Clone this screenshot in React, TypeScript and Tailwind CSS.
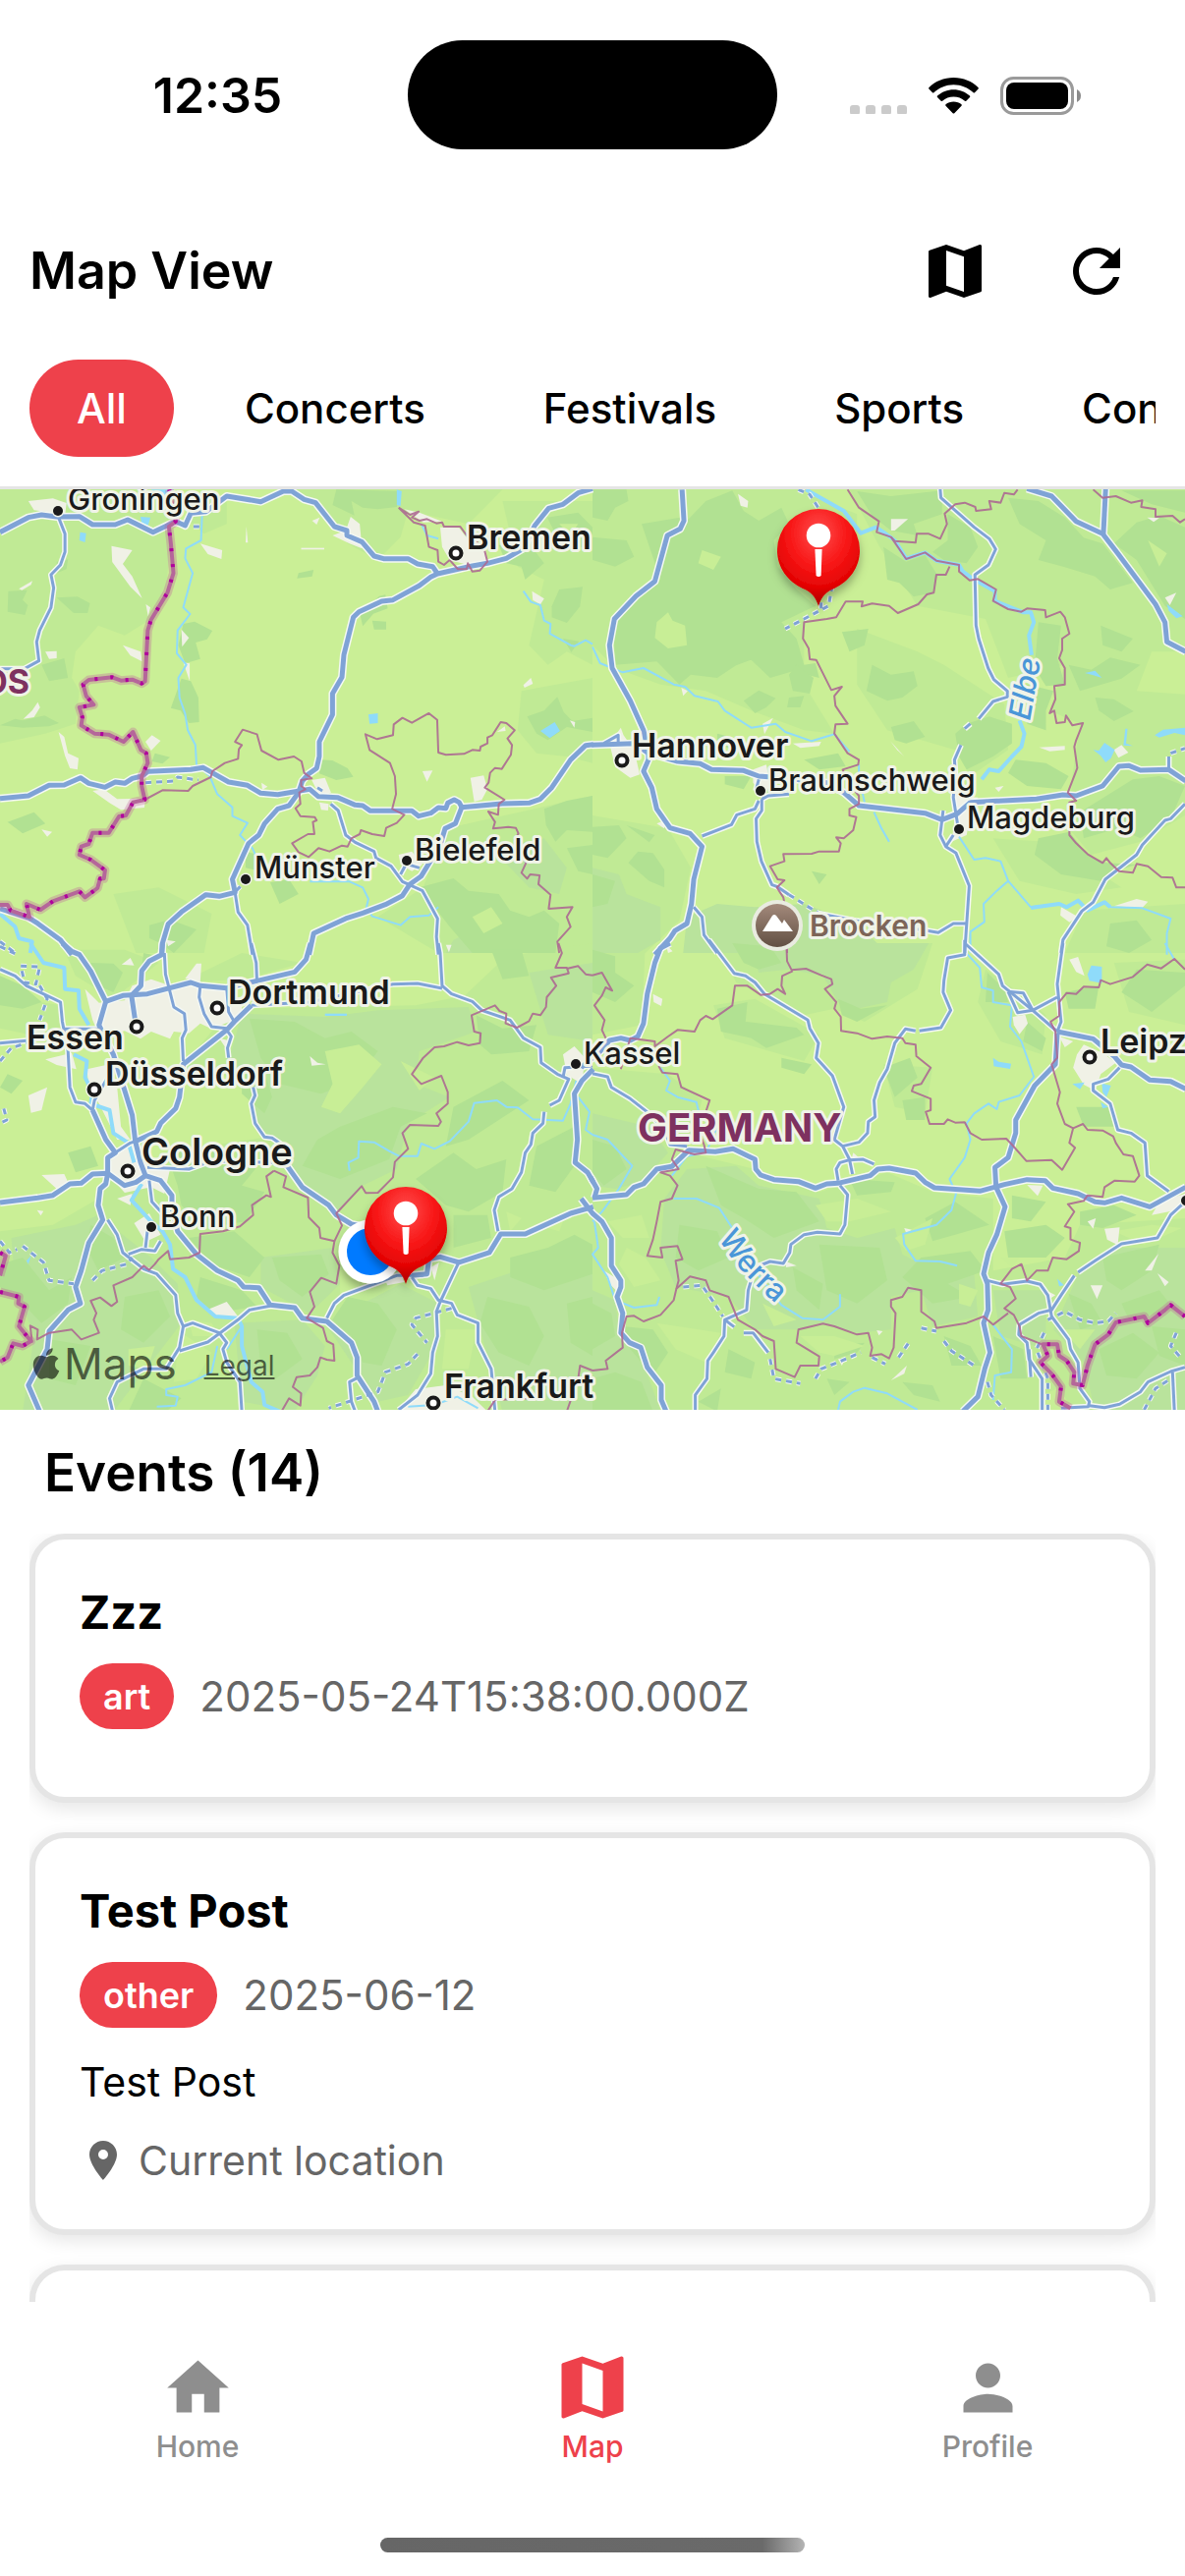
import React from "react";
import { MdHome, MdMap, MdPerson, MdRefresh, MdLocationOn } from "react-icons/md";
import { FaApple } from "react-icons/fa";

type Sheet = {
  at: string;
  light: string[];
  hill: string[];
  forest: string[];
  clearing: string[];
  urban: string[];
  water: string[];
  rivers: string[];
  wideRivers: string[];
  majors: string[];
  minors: string[];
  dashed: string[];
  states: string[];
  nations: string[];
};

const northWest: Sheet = {
  at: "translate(0 490) scale(0.38457 0.33333)",
  light: [
    "0 25 440 25 460 120 450 200 440 320 400 420 330 470 260 440 200 520 190 600 210 640 200 740 120 770 0 800",
    "770 25 1330 25 1240 130 1080 90 1060 170 1000 240 920 190 860 100",
    "1330 60 1568 60 1568 560 1500 520 1450 560 1400 500 1440 300 1370 260",
    "1380 640 1568 600 1568 860 1500 840 1420 830 1370 760",
    "1180 1060 1568 960 1568 1440 1160 1440 1000 1330 1120 1240",
    "300 1260 420 1240 560 1320 540 1440 360 1440",
    "500 30 600 60 600 130 540 160 500 120",
  ],
  hill: ["1300 1120 1440 1090 1500 1180 1480 1260 1400 1240", "1200 1400 1320 1330 1450 1390 1470 1440 1180 1440"],
  forest: [
    "150 355 205 352 238 372 232 402 195 402",
    "22 335 72 332 60 362 74 378 66 408 20 398",
    "150 245 180 238 176 268 150 280",
    "485 435 515 428 562 456 548 482 518 492 530 542 490 556 472 500",
    "480 602 505 610 525 660 527 735 500 738 478 700 452 692",
    "0 745 40 725 60 730 118 715 156 738 130 748 60 752",
    "890 25 1060 30 1050 78 1000 85 960 80 930 60 938 104 880 72",
    "790 280 830 270 826 290 786 296",
    "1004 350 1020 346 1026 388 988 404 960 442 952 402",
    "985 425 1022 428 1022 452 990 452",
    "850 850 880 852 920 876 935 902 890 912 845 892",
    "1395 718 1440 700 1475 658 1492 705 1515 732 1568 722 1568 765 1500 750 1450 790 1420 770",
    "1460 382 1480 330 1542 322 1535 382 1500 432 1460 415",
    "1490 480 1532 488 1512 522",
    "1320 195 1400 190 1440 250 1390 300 1380 260 1340 250",
    "1448 110 1530 95 1568 140 1568 210 1500 190 1470 160",
    "395 1355 450 1338 520 1368 492 1402 460 1440 425 1410 395 1395",
    "410 830 450 842 430 862 402 855",
    "1110 1240 1200 1212 1240 1250 1320 1260 1350 1310 1400 1330 1440 1310 1480 1350 1470 1440 1250 1440 1190 1360",
    "1440 1000 1500 975 1568 960 1568 1070 1500 1065 1470 1100 1445 1050",
    "1500 1120 1568 1110 1568 1200 1530 1190",
    "650 1130 700 1145 690 1190 650 1180",
    "715 1225 765 1215 790 1260 740 1290",
    "20 1040 90 1010 120 1045 60 1075",
    "110 560 170 540 180 600 130 610",
  ],
  clearing: ["1250 1330 1300 1300 1330 1350 1280 1380", "1480 130 1530 130 1510 165"],
  urban: [
    "75 60 140 52 176 66 172 105 120 92 90 88",
    "295 197 350 210 325 252 350 290 376 357 345 322 297 246",
    "50 328 86 304 82 316 58 332",
    "325 500 372 520 376 550 345 532",
    "120 520 150 518 150 540 130 542",
    "62 725 85 700 100 674 106 690 90 720",
    "155 765 170 780 180 830 208 845 205 880 185 876 172 838",
    "385 795 402 775 425 792 400 822",
    "880 165 915 150 928 108 952 130 958 205 925 190",
    "1165 140 1215 142 1240 180 1285 210 1290 245 1260 262 1190 240 1170 200",
    "1070 85 1110 95 1170 122 1120 125",
    "530 190 588 210 586 237 550 222",
    "480 452 500 478 482 505",
    "485 553 502 556 502 610",
    "1408 335 1440 358 1430 376 1410 362",
    "1385 622 1405 600 1410 618 1388 630",
    "1245 905 1280 898 1290 940 1275 972 1255 978",
    "1118 885 1145 883 1130 917",
    "825 912 860 905 876 950 848 966",
    "845 980 870 985 868 1005 850 1003",
    "245 945 275 940 310 970 385 968 382 996 320 1003 290 982",
    "110 1063 138 1070 125 1085",
    "1055 1140 1090 1130 1118 1170 1090 1190 1060 1170",
    "1315 765 1336 748 1338 762",
    "1508 730 1522 735 1520 752",
    "826 120 846 110 838 132",
    "652 137 656 187 650 187",
    "797 203 858 203 858 208 797 208",
    "386 375 398 385 392 412",
    "692 920 708 932 694 942",
    "440 1400 465 1405 445 1420",
  ],
  water: [
    "975 712 1000 708 1000 738 978 740",
    "1430 762 1468 735 1482 762 1455 784",
    "372 108 398 110 392 135 375 130",
    "212 155 228 158 225 186 210 180",
    "400 25 460 25 450 50 410 40",
    "1050 25 1063 30 1060 75 1050 72",
  ],
  rivers: [
    "535 95 532 180 492 205 490 235 510 280 485 385 503 405 470 455 468 525 493 560 472 600 475 660 490 710 497 760 517 805 520 865 555 900 575 955 615 995 615 1022 655 1043 635 1080 668 1120 680 1150",
    "1385 335 1405 368 1430 378 1440 425 1457 435 1455 465 1510 500 1520 503 1550 485 1568 497",
    "820 1222 925 1222 960 1240 975 1275 970 1300 985 1328 1060 1355 1085 1330 1135 1325 1160 1300",
    "1115 130 1130 165 1160 175",
  ],
  wideRivers: ["0 1320 40 1360 50 1395 85 1405 80 1440"],
  majors: [
    "0 155 75 110 110 102 150 108 210 107 245 132 305 132 338 117 405 155 465 122 490 135 505 97 545 92 600 45 690 62 750 30 772 30 805 55 835 65 885 138 918 150 918 165 958 185 990 228 1015 236 1080 236 1105 252 1145 260 1158 282",
    "1568 22 1530 35 1490 70 1452 82 1415 135 1385 205 1340 235 1290 250 1250 258 1158 282 1140 292 1110 318 1040 362 1010 366 950 398 935 415 910 530 905 598 880 648 880 712 845 795 845 840 838 876 815 895 800 915 790 950 765 990 735 1000 700 1045 685 1080 658 1105 615 1215 622 1255 580 1267 545 1262 480 1315 445 1352 430 1410 428 1445",
    "0 968 75 960 130 928 170 927 213 905 235 922 278 934 305 918 330 922 350 907 375 900 392 886 505 880 538 874 605 918 655 928 690 952 735 956 820 940 842 962 893 965 940 988 960 990 980 1006 1090 1006 1108 1022 1140 1013 1160 996 1180 998 1185 982 1202 972 1215 980 1222 995 1330 984 1400 982 1430 970 1460 935 1510 850 1550 806 1570 803",
    "1222 995 1205 1045 1178 1060 1165 1110 1115 1205 1085 1230 1065 1265 1020 1292 960 1318 915 1335 830 1380 818 1445",
    "0 1305 75 1332 100 1350 160 1400 190 1445",
  ],
  minors: [
    "155 110 172 160 172 215 160 255 135 285 142 325 135 385 105 455 97 490 103 548 65 572 0 572",
    "875 985 895 1005 915 1080 940 1102 990 1130 995 1150 1035 1175 1065 1222 1118 1250 1158 1335 1155 1390 1160 1445",
    "1060 1200 1075 1168 1110 1180",
    "622 1255 630 1315 655 1355 668 1445",
  ],
  dashed: ["385 920 460 915 470 903 525 912", "512 138 530 138", "625 1250 650 1220", "0 1405 40 1440", "840 935 860 950"],
  states: [
    "383 972 430 943 498 945 510 930 558 903 562 885 595 860 630 847 632 818 640 805 622 795 642 758 680 772 692 822 737 850 778 840 798 855 805 890 825 907 797 912 797 930 808 940 792 950 795 985 782 998 795 1022 833 1025 838 1035 828 1040 832 1077 815 1077 773 1105 790 1132 817 1147 843 1120 872 1130 905 1112 920 1115 930 1090 952 1077 955 1065 985 1077 1017 1083 1022 1058 1050 1043 1070 1018 1038 1000 1048 955 1045 900 1032 860 978 820 967 772 998 787 1040 775 1042 742 1065 722 1090 737 1135 708 1157 728 1160 828 1180 835 1228 832 1250 820 1270 822 1272 810 1290 800 1290 782 1303 775 1325 735 1340 738 1362 760 1343 785 1355 805 1352 835 1328 878 1310 875 1297 890 1293 920 1283 935 1335 972 1320 985 1318 1018 1292 1008 1310 1040 1305 1060 1345 1055 1365 1058 1372 1075 1362 1095 1392 1165 1380 1195 1395 1213 1403 1200 1428 1203 1425 1230 1457 1262 1452 1305 1515 1300 1500 1330 1510 1360 1475 1405 1480 1440",
    "1055 80 1095 125 1125 135 1135 200 1158 210 1160 245 1175 255 1190 240 1212 268 1235 268 1238 250 1250 275 1270 272 1290 245 1280 200 1235 165 1218 138 1175 138 1170 125 1155 128 1130 115 1110 120 1090 110 1108 92 1085 102 1055 80",
  ],
  nations: [
    "448 25 452 50 465 122 447 138 452 188 459 280 443 340 400 422 391 455 384 610 375 617 350 605 320 608 297 598 235 606 220 620 228 655 248 682 210 690 218 720 215 745 250 770 287 773 327 795 352 765 373 820 387 830 391 860 375 900 375 930 383 972 352 980 333 1020 315 1023 288 1073 245 1073 235 1107 215 1115 210 1140 240 1155 278 1187 275 1213 265 1213 258 1242 225 1270 210 1252 140 1282 107 1308 70 1290 78 1330 28 1310 20 1293 0 1293",
  ],
};

const northEast: Sheet = {
  at: "translate(603 490) scale(0.38457 0.33333)",
  light: [
    "0 25 540 25 700 100 700 180 560 440 560 620 640 770 560 760 420 700 300 640 180 620 60 570 0 500",
    "680 25 1568 25 1568 520 1480 520 1440 640 1568 650 1568 1020 1450 1100 1320 1140 1260 1060 1270 900 1290 740 1210 700 1250 560 1100 600 1040 420 860 380 760 200",
    "700 450 860 520 930 560 1090 680 1100 820 1000 900 960 820 780 760 700 620",
    "0 1020 200 1060 260 1180 230 1340 140 1440 0 1440",
    "1060 1090 1200 1100 1320 1180 1400 1240 1280 1260 1130 1220",
    "1300 1310 1568 1290 1568 1440 1250 1440",
  ],
  hill: ["250 1330 330 1290 430 1300 560 1290 700 1350 780 1440 240 1440", "0 1180 70 1200 90 1260 180 1300 180 1400 120 1440 0 1440"],
  forest: [
    "130 130 232 110 250 120 300 60 370 28 400 90 440 120 500 80 520 130 480 180 490 260 540 330 590 380 500 430 540 480 560 560 590 555 600 600 530 580 470 600 420 545 380 562 330 600 260 590 230 620 170 550 60 560 55 430 115 350 180 300",
    "0 25 90 25 95 60 60 80 40 120 0 110",
    "0 170 90 180 110 230 60 260 0 240",
    "700 30 790 45 925 28 925 100 850 130 860 165 790 150 740 105",
    "770 200 830 245 880 225 912 285 900 340 850 352 812 310 780 300",
    "940 100 1000 140 1020 200 990 250 930 240 900 215 940 180",
    "1100 50 1180 60 1250 110 1300 172 1350 190 1430 310 1370 330 1330 290 1250 262 1180 240 1200 180 1130 130",
    "1440 125 1500 105 1568 140 1568 420 1515 380 1440 240 1380 190",
    "1400 28 1568 28 1568 95 1480 70",
    "1180 430 1240 440 1230 540 1250 620 1200 625 1170 570",
    "740 560 790 590 850 580 860 625 820 660 780 670 725 640",
    "400 670 440 638 485 662 460 690 430 708",
    "520 590 540 560 585 600 575 648 530 640",
    "520 660 560 655 550 690 515 690",
    "960 770 990 740 1050 718 1110 740 1110 800 1060 840 990 880 970 840",
    "790 750 850 732 880 780 830 800 800 790",
    "1115 610 1220 640 1200 700 1200 760 1150 740 1160 690",
    "1260 560 1320 575 1370 538 1450 560 1400 602 1290 640",
    "1330 660 1380 665 1432 702 1380 732 1340 700",
    "1345 440 1430 480 1400 520 1350 500",
    "1120 850 1200 860 1260 900 1240 940 1150 930 1100 890",
    "1180 1090 1262 1070 1310 1140 1360 1165 1440 1170 1380 1190 1345 1220 1240 1200 1170 1140",
    "1360 960 1430 910 1500 900 1568 930 1530 1030 1450 1090 1390 1060 1300 1090 1290 1010",
    "0 1055 70 1050 90 1090 40 1150 0 1140",
    "120 1130 160 1135 190 1185 190 1240 150 1220 95 1165",
    "90 1050 165 1080 150 1102",
    "0 1200 60 1220 40 1290 0 1300",
    "350 900 420 900 400 940 350 925",
    "560 850 650 830 670 870 600 880",
    "660 460 730 450 720 500 680 520",
    "330 770 400 790 380 820 330 805",
    "1370 1350 1440 1340 1480 1400 1420 1440 1360 1420",
    "580 1190 620 1200 600 1230",
  ],
  clearing: ["170 430 200 400 212 425 245 440 250 500 200 510 165 478", "290 210 340 230 320 270 280 250", "1470 180 1520 220 1500 260"],
  urban: [
    "45 800 75 752 82 775 110 820 125 895 100 905 60 872",
    "790 115 835 115 800 150 790 150",
    "385 38 412 60 410 80 392 74",
    "450 740 478 722 455 772",
    "530 800 605 795 600 808 550 814",
    "235 630 252 640 240 655",
    "425 880 460 865 470 930 450 960 425 920",
    "788 793 800 808 825 840 806 820",
    "1182 812 1250 808 1250 820 1210 824",
    "1380 820 1400 805 1418 828 1392 844",
    "960 960 1020 965 1000 1020 990 1080 950 1100 960 1020",
    "1240 1300 1285 1330 1262 1346 1238 1325",
    "1380 1297 1440 1275 1470 1283 1455 1302",
    "1515 355 1545 340 1528 378",
    "170 1045 190 1035 190 1060",
    "1065 935 1088 930 1075 948",
    "1468 110 1500 112 1485 124",
  ],
  water: [
    "1325 820 1340 822 1355 798 1382 820 1372 845 1358 858 1345 838",
    "1488 775 1510 758 1568 752 1568 775 1540 768 1500 782",
    "1303 585 1330 578 1348 600 1325 592",
    "1520 375 1562 412 1545 418 1525 395",
    "1410 755 1416 755 1412 800 1430 808 1405 806",
  ],
  rivers: [
    "0 505 20 555 80 583 135 570 215 620 245 627 270 655 332 672 350 700 420 752 485 740 510 765 580 793 640 772 680 825",
    "705 865 705 900 720 980",
    "745 1010 765 1060 785 1100",
    "970 1085 1010 1155 1040 1150 1080 1160 1100 1220 1160 1300 1235 1290 1255 1300 1285 1280 1310 1310 1355 1285 1370 1300 1455 1303 1530 1335 1520 1380 1520 1445",
    "1100 1220 1070 1250 1035 1290 1037 1345 1000 1375 1000 1440",
  ],
  wideRivers: [
    "565 25 665 90 710 158 750 140 770 155 800 180 830 235 880 217 910 242 970 255 980 275 1010 300 1065 335 1065 365 1140 400 1160 400 1168 430 1155 470 1162 530",
    "1130 730 1143 770 1135 810 1110 840 1075 885 1050 880 1030 910",
    "1160 1302 1235 1290 1255 1300 1285 1280 1310 1310 1355 1285 1370 1300",
  ],
  majors: [
    "237 25 242 120 232 145 198 165 165 305 115 350 58 420 45 500 52 570 100 670 135 760 148 830 148 850 135 885 157 935 170 1000 205 1058 258 1075 290 1115 268 1215 262 1290 250 1350 218 1372 205 1395 165 1445",
    "-2 805 110 800 148 830 225 855 285 862 315 880 400 883 440 900 500 905 620 920 665 950 705 990 880 1013 925 1033 965 1015 1000 980 1070 976 1175 970 1245 957 1280 960 1350 930 1393 870 1420 868 1450 882 1525 880 1570 915",
    "1150 22 1215 45 1280 122 1350 160 1390 220 1490 375 1515 430 1520 490 1570 520",
    "1358 22 1352 160",
  ],
  minors: [
    "920 22 922 50 1010 140 1050 175 1067 207 1048 255 1012 285 1015 440 1022 480 1047 570 1062 605 1098 640 1098 658 1060 672 1022 725",
    "985 755 1000 740",
    "975 805 958 850 960 890 955 965 968 1060",
    "928 1005 920 1080 935 1115 962 1135 997 1235 985 1440",
    "935 1115 955 1080",
    "440 910 432 945",
    "448 970 465 960 520 955",
    "440 975 430 1000 382 1018 368 1048 290 1083",
    "448 970 448 1005 433 1030 435 1100 447 1160 475 1232 490 1238 520 1262",
    "600 1320 700 1342 885 1372 915 1378 955 1350 990 1350",
    "1568 985 1530 1030 1515 1035 1455 1110 1440 1140 1357 1215 1325 1285 1295 1312 1245 1400 1240 1440",
    "1525 880 1525 840",
    "268 1300 290 1330 295 1385 330 1440",
    "30 800 68 775 68 800",
  ],
  dashed: ["520 1262 600 1320", "545 25 575 40 600 85 640 280 625 380 560 420 510 450", "605 370 605 400", "1530 830 1568 815"],
  states: [
    "675 25 705 80 758 122 752 155 790 170 800 182 855 187 858 160 890 160 920 175 938 130 932 98 960 70 985 65 1013 78 1015 90 1055 85 1050 60 1080 65 1090 35 1115 40 1125 25",
    "790 170 830 237 880 217 910 242 970 255 970 275 998 302 1020 298 1068 330 1060 365 1100 390 1135 398 1150 388 1198 393 1200 415 1238 398 1250 415 1262 465 1243 480 1243 515 1235 540 1250 570 1250 620 1222 625 1225 665 1210 708 1222 700 1228 738 1250 735 1253 715 1270 745 1298 738 1280 790 1275 810 1283 875 1258 950 1280 975 1262 980 1262 1080 1280 1105 1310 1138 1350 1165 1360 1150 1370 1165 1393 1190 1430 1195 1440 1168 1470 1175 1505 1208 1535 1210 1545 1240 1568 1240",
    "945 260 935 285 910 285 903 340 885 345 862 375 808 402 785 380 740 373 712 382 715 367 670 367 645 415 620 420 560 430 557 480 572 510 575 543 592 545 632 637 660 627 640 655 643 685 675 740 643 742 640 770 675 830 705 850 703 865 662 880 680 925 705 960 705 985 680 1000 680 1020 698 1025 690 1065 665 1090 645 1087 657 1105 652 1130 600 1130 580 1137 505 1138 508 1160 470 1175 490 1215 508 1218 488 1240 505 1270 510 1300 515 1440",
    "1325 25 1350 50 1385 45 1425 65 1455 58 1452 78 1490 85 1490 108 1535 105 1555 125 1568 115",
  ],
  nations: [],
};

const southWest: Sheet = {
  at: "translate(0 960) scale(0.38457 0.33333)",
  light: [
    "170 20 330 20 420 60 300 170 200 100",
    "430 640 720 590 700 430 480 380 560 270 640 200 1100 190 1230 160 1340 40 1568 0 1568 1430 0 1430 0 880 140 860 260 780 280 700 380 720",
    "0 160 160 190 170 260 80 280 0 260",
    "480 120 640 30 800 60 650 110",
  ],
  hill: [
    "640 215 860 225 1000 205 1240 195 1260 270 1110 330 1100 430 1190 470 1080 550 1050 690 960 740 890 830 800 760 720 600 670 540 660 440 600 380",
    "30 900 200 860 260 830 400 960 470 1040 480 1160 400 1280 300 1430 60 1430 90 1200 40 1040",
    "690 960 880 930 900 1040 820 1130 690 1050",
    "860 1160 1060 1040 1160 1100 1150 1240 1080 1380 1000 1400",
    "1240 1050 1420 980 1568 1000 1568 1430 1330 1430",
    "620 1160 800 1150 860 1230 840 1320 780 1430 640 1400",
    "1400 90 1568 60 1568 300 1450 280",
  ],
  forest: [
    "240 60 300 62 325 90 300 150 260 130 235 100",
    "380 30 420 40 400 60 375 70",
    "440 640 560 620 590 680 690 670 640 740 700 760 650 850 540 870 480 800 470 740",
    "640 400 700 390 720 470 700 520 640 460",
    "660 230 780 240 860 290 930 270 1000 330 940 420 850 460 740 430 690 350",
    "900 560 1040 500 1130 520 1060 560 1030 660 900 720 800 680 840 600",
    "1100 720 1200 640 1260 690 1340 660 1330 760 1240 820 1180 800",
    "1200 830 1290 830 1300 900 1200 930",
    "1260 220 1330 260 1420 250 1400 330 1300 340 1270 310",
    "1200 500 1330 420 1400 480 1320 540 1240 600 1180 620",
    "1420 620 1520 560 1520 680 1470 760 1400 740",
    "1350 960 1450 930 1520 890 1568 920 1568 1010 1440 1060 1350 1020",
    "1290 1080 1400 1110 1440 1200 1400 1290 1320 1250 1270 1160",
    "1500 1100 1568 1080 1568 1260 1510 1220",
    "920 1080 1000 1100 1050 1180 1010 1290 960 1280 930 1200 880 1150",
    "500 900 620 880 700 960 660 1020 560 980",
    "530 1020 640 1060 680 1110 560 1130 520 1080",
    "240 860 300 900 330 960 260 1000 230 930",
    "0 980 60 960 130 1060 190 1020 180 1100 110 1160 60 1100 0 1050",
    "130 1210 240 1230 200 1350 130 1330",
    "330 1080 420 1060 450 1140 380 1220 320 1180",
    "380 1330 480 1390 440 1430 340 1430",
    "680 1180 760 1190 800 1270 730 1330 690 1290",
    "720 960 850 950 870 1010 800 1080 740 1030",
    "1300 20 1380 20 1400 100 1330 110",
    "0 100 60 130 110 180 60 200 0 190",
    "180 640 240 620 260 680 200 700",
    "20 400 60 420 30 460 0 440",
  ],
  clearing: [
    "860 330 950 310 1010 370 960 440 900 520 850 500 880 430",
    "1000 800 1090 780 1100 860 1010 850",
    "500 1150 560 1160 580 1200 510 1200",
    "1180 1180 1260 1180 1240 1300 1170 1300",
    "900 1000 960 970 950 1060 900 1080",
    "1060 360 1150 410 1110 450",
    "480 1190 560 1250 520 1330 460 1340 470 1250",
    "1420 860 1500 820 1480 880",
    "1340 820 1380 840 1350 880",
    "340 1240 410 1230 390 1300 340 1290",
  ],
  urban: [
    "225 140 262 182 330 175 350 130 400 110 450 130 505 120 605 140 640 180 640 225 560 262 530 245 500 275 460 270 450 292 400 270 372 292 330 268 265 285 245 235",
    "230 385 290 370 310 440 320 560 345 600 310 600 262 490 235 440",
    "300 640 355 612 395 650 450 690 435 765 400 745 330 762 285 705",
    "75 465 125 440 110 510 82 518",
    "110 708 170 705 182 735 152 752",
    "355 855 395 825 425 890 385 912",
    "548 1120 600 1095 630 1140 580 1143",
    "820 345 840 365 862 370 825 374",
    "120 355 190 335 202 385 150 372",
    "1020 1030 1060 1010 1070 1035 1025 1045",
    "1140 990 1162 975 1150 1030",
    "1100 1362 1180 1350 1250 1385 1290 1430 1050 1430",
    "1490 340 1520 315 1548 350 1540 430 1500 402",
    "322 65 345 45 355 68",
    "520 62 533 62 530 118 490 108",
    "580 290 615 300 600 325",
    "310 780 350 765 345 800",
    "98 815 115 818 108 832",
    "1180 5 1195 5 1188 28",
  ],
  water: ["860 215 918 215 918 222 860 222", "70 970 82 955 75 980"],
  rivers: [
    "600 1240 640 1170",
    "575 1230 560 1310 490 1350 440 1362 440 1380 470 1385 465 1412 415 1415",
    "925 695 922 670 948 655 950 605 990 608 1030 635 1055 650 1105 650 1115 612 1150 628 1190 605 1240 545 1255 488 1315 480 1340 500 1370 502 1410 538 1490 542 1510 490 1525 420",
    "1530 470 1560 515 1550 570 1568 585",
    "1080 1415 1150 1410 1210 1385 1265 1420",
  ],
  wideRivers: [
    "80 0 115 60 170 75 172 140 208 145 210 200 235 250",
    "195 340 230 360 225 410 245 455 240 490 290 510 300 580 340 610 355 670",
    "375 735 348 785 400 850 430 880 450 920 458 995 490 1020 520 1090 570 1140 630 1145 640 1170 640 1230 665 1340 695 1370 700 1410 740 1430",
  ],
  majors: [
    "165 0 190 25 210 35 240 85 280 178 262 250 300 340 330 450 350 525 358 605 372 670 385 710 425 725 455 770 455 810 470 880 520 950 575 1000 630 1030 645 1050 685 1052 715 1105 780 1113 800 1145 865 1155 930 1220 945 1265 945 1320 990 1400 1000 1430",
    "280 178 325 160 390 155 505 120 530 130 600 137 680 115 780 88 810 50 822 0",
    "0 792 100 778 140 770 185 735 215 733 245 705 285 703 330 740 360 730 385 710",
    "430 0 428 35 395 55 375 85 373 130 348 160 357 230",
    "665 190 620 240 600 265 485 370 475 470 465 505 425 550 415 575 358 605",
    "740 640 760 680 800 745 870 800 890 830 930 858 980 870",
    "1570 385 1540 420 1520 460 1528 600 1522 670 1555 700 1570 730",
    "1570 805 1510 825 1390 888 1325 888 1295 945 1215 975 1165 958 1135 965 1130 1010 1090 1015",
    "285 703 280 735 265 750 260 800 272 845 235 915 215 1000 200 1050 213 1100 180 1120 130 1185 125 1240 75 1350 105 1430",
    "285 703 285 655 305 640 280 600 245 510",
  ],
  minors: [
    "435 30 438 95 460 195 488 215 492 265 482 290 485 360",
    "530 130 527 165 540 215 560 255 600 260",
    "600 137 605 210 620 240",
    "600 265 612 285 602 320 605 350",
    "670 440 675 465 665 490 675 550 700 592 720 595 745 615",
    "665 0 678 60 680 115",
    "1160 0 1165 30 1170 130 1195 155 1250 178 1275 205 1350 235 1385 290 1430 318 1432 365 1475 400 1505 415 1480 480 1455 495",
    "1490 410 1495 380 1568 375",
    "665 190 820 180 1040 125 1105 123 1170 138",
    "1440 515 1437 550 1410 580 1405 615 1390 640 1380 700 1355 750 1320 775 1308 815 1318 880",
    "245 510 225 490 200 485 185 440 180 330 165 240 160 180 70 130 40 100 0 80",
    "245 510 250 480 290 400",
    "305 640 345 610 358 605",
    "390 685 500 690 560 665 720 670",
    "285 845 310 890 325 945 380 995 415 1010 465 1075 470 1130 485 1170 475 1235 440 1300 380 1300 310 1340 290 1390 298 1430",
    "485 1170 510 1160 580 1190 600 1220 590 1240 600 1280 635 1340 640 1430",
    "475 1245 550 1218 630 1150 660 1120 715 1108",
    "865 1145 885 1100 910 1075 980 1045 1050 1015 1120 1015",
    "1090 1020 1105 1045 1140 1055 1160 1090 1195 1100 1210 1135 1265 1160 1265 1220 1300 1300 1310 1430",
    "1212 980 1165 1095 1155 1125 1158 1200 1145 1250 1140 1315 1105 1380 1055 1425",
    "385 930 390 880",
    "395 725 402 790 430 825",
    "340 950 375 935 410 940 425 910",
    "0 305 70 298",
    "170 262 262 262",
    "950 1325 925 1340 930 1400 940 1430",
  ],
  dashed: [
    "0 10 45 35",
    "55 70 105 72 95 125 65 120 55 70",
    "105 130 125 170 105 235",
    "0 360 30 320 70 305",
    "10 505 18 540 0 550",
    "0 910 25 945 45 935",
    "60 925 115 975 130 1030 195 1040",
    "245 1030 270 1000 335 980 350 960",
    "1195 1115 1100 1145 1090 1165 1130 1220",
    "1105 1255 1080 1285 1020 1310 1000 1370 870 1420",
  ],
  states: [
    "725 695 757 712 750 745 815 777 817 837 845 870 848 900 885 910 905 862 890 825 957 742 968 763 1000 762 1040 715 1045 668 1080 628 1065 580 1085 555 1160 558 1167 545 1155 520 1185 490 1185 455 1168 405 1115 430 1090 400 1120 350 1150 318 1175 315 1210 302 1240 312 1270 305 1272 275 1255 270 1248 220 1310 190 1322 207 1340 215 1338 245 1368 258 1400 238 1410 215 1430 220 1445 195 1447 165 1472 130 1458 105 1505 92 1500 75 1470 75 1487 30 1478 0",
    "1500 78 1530 70 1550 95 1568 98",
    "725 695 705 712 717 775 705 770 667 800 670 830 635 865 590 880 530 888 528 945 500 960 450 965 445 940 420 965 410 980 395 998 380 985 350 1020 300 1045 310 1095 295 1108 265 1082 240 1092 255 1130 248 1150 262 1190 215 1210 190 1180 130 1190 98 1210 100 1180 80 1168 85 1220",
    "885 910 880 945 898 985 890 1040 850 1022 820 1065 832 1110 812 1145 855 1175 865 1215 882 1225 885 1275 865 1272 848 1265 840 1295 820 1320 785 1325 775 1355 797 1375 795 1412 765 1390 745 1430",
    "1568 1305 1535 1290 1530 1330 1500 1430",
    "1290 1430 1310 1395 1400 1390",
  ],
  nations: ["0 945 15 955 0 1015", "0 1065 50 1080 48 1100 65 1110 50 1170 82 1215 60 1230 35 1222 20 1265 0 1278"],
};

const southEast: Sheet = {
  at: "translate(603 960) scale(0.38457 0.33333)",
  light: [
    "0 380 200 400 290 480 250 640 430 690 600 760 780 700 900 760 1060 780 1060 1000 1250 960 1290 860 1568 840 1568 1430 0 1430",
    "0 0 140 0 130 250 0 280",
    "330 0 900 0 860 140 720 240 640 200 560 220 380 120",
    "320 190 430 170 600 280 560 360 350 290",
    "1040 80 1140 160 1200 220 1190 340 1080 300 1020 180",
    "1380 60 1568 50 1568 250 1420 210",
    "770 370 900 380 880 520 800 500",
  ],
  hill: [
    "420 0 890 0 850 80 790 120 780 180 700 200 650 180 610 100 520 80 440 90",
    "190 780 250 690 380 680 440 740 600 780 620 870 700 900 800 870 820 950 900 1000 1010 1010 1020 1140 900 1170 870 1060 790 1080 790 1180 700 1190 600 1160 540 1180 430 1180 360 1080 220 1050 180 940",
    "1290 1000 1400 930 1568 930 1568 1430 1330 1430 1300 1280 1220 1180",
    "0 1060 60 1090 70 1180 140 1300 180 1430 0 1430",
    "0 520 150 560 200 640 130 730 60 750 0 740",
    "1060 1060 1200 1060 1200 1240 1080 1200",
  ],
  forest: [
    "370 0 470 10 500 60 440 80 400 60",
    "330 200 410 180 405 240 540 258 560 280 460 320 420 290 340 270",
    "0 20 60 40 60 90 110 130 60 180 0 150",
    "500 350 580 370 560 400 500 380",
    "650 170 710 200 780 190 700 240 660 220",
    "1045 90 1090 140 1100 180 1040 180",
    "1440 80 1568 90 1568 130 1480 210 1400 150",
    "1150 240 1200 290 1190 330 1140 300",
    "770 380 840 350 860 410 800 470",
    "820 480 880 470 880 540 830 540",
    "1280 500 1370 500 1390 560 1300 560",
    "1250 150 1340 130 1330 200 1260 200",
    "0 600 60 620 90 690 30 740 0 700",
    "300 680 440 750 540 760 600 850 480 900 400 840 340 800",
    "680 720 800 730 790 760 700 770",
    "880 840 960 790 1050 860 960 890 900 910",
    "870 960 1000 940 1040 1000 940 1040 1000 1080 900 1100 820 1020",
    "600 920 760 930 780 1030 700 1100 620 1060",
    "230 860 330 880 360 960 280 1000 220 960",
    "530 990 610 1040 600 1120 540 1060",
    "1090 880 1200 860 1250 900 1200 960 1100 960",
    "1110 770 1200 790 1160 850 1110 840",
    "1290 820 1380 800 1440 830 1350 870 1290 860",
    "1350 960 1500 920 1480 1000 1400 1060 1360 1030",
    "1260 1070 1320 1100 1350 1160 1290 1180",
    "1400 1100 1500 1060 1540 1120 1420 1150",
    "1340 1240 1430 1190 1500 1250 1440 1330 1360 1320",
    "1480 1170 1568 1180 1568 1290 1500 1260",
    "80 1170 160 1180 200 1250 160 1320 100 1240",
    "0 1100 50 1130 60 1200 0 1240",
    "0 1330 60 1310 130 1340 160 1430 0 1430",
    "360 1240 430 1280 420 1330 350 1310",
    "640 1230 720 1220 700 1250 640 1270",
    "930 1200 1000 1230 1030 1290 950 1290",
    "820 1340 900 1350 920 1400 850 1380",
    "1060 1200 1140 1240 1150 1330 1080 1330",
    "280 1400 340 1360 330 1430",
    "620 1330 680 1340 640 1380",
  ],
  clearing: [
    "800 900 900 840 880 920 830 940",
    "170 1160 340 1190 300 1280 220 1240",
    "450 1100 540 1150 480 1170",
    "970 1040 1020 1060 1000 1110 970 1100",
    "590 800 700 780 790 820 680 850 620 850",
    "90 930 140 960 180 1030 110 1050 70 980",
    "1080 960 1130 960 1110 990",
    "1240 1180 1330 1180 1290 1240",
    "40 850 130 830 150 900 80 900",
    "1380 880 1480 860 1560 870 1460 920",
    "1190 1380 1230 1360 1280 1430 1200 1430",
    "550 1200 640 1200 720 1230 640 1260 600 1250",
  ],
  urban: [
    "1300 310 1350 335 1385 365 1345 400 1330 450 1300 432 1272 380 1282 340",
    "1112 225 1145 218 1152 245 1130 278 1115 250",
    "160 155 185 170 182 192 162 180",
    "1262 50 1285 42 1302 100 1280 88",
    "1355 872 1395 868 1390 922 1362 905",
    "1310 850 1332 840 1325 872",
    "1318 1045 1350 1045 1335 1087",
    "1495 1008 1525 1035 1515 1048",
    "1462 1000 1498 948 1480 1000",
    "30 1000 80 1035 75 1075 45 1040",
    "512 972 540 985 512 990",
    "790 1335 832 1290 825 1315",
    "1150 738 1192 740 1178 772",
    "1500 790 1568 765 1568 810 1480 830",
    "1235 285 1272 300 1250 318",
    "1200 1060 1225 1075 1205 1090",
    "825 870 845 875 830 885",
    "752 1182 768 1185 758 1198",
    "650 1270 670 1268 660 1290",
    "690 640 710 660 685 662",
    "195 5 212 25 200 30",
  ],
  water: [
    "1310 95 1320 68 1348 72 1348 122 1315 115",
    "1060 350 1075 362 1108 368 1105 384 1062 376",
    "1270 430 1302 425 1290 446",
    "1348 428 1372 435 1360 470 1350 455",
    "1345 485 1365 500 1350 505",
    "1230 1025 1248 1045 1235 1048",
  ],
  rivers: [
    "0 585 40 600 105 680 70 750 25 820 0 850",
    "5 850 15 930 0 950 40 1020 60 1090 110 1113 170 1105 177 1080",
    "215 780 275 780 335 808 370 870 430 1000 500 1105 555 1145 610 1150 655 1110 655 1072",
    "650 1425 655 1400 690 1370 720 1358 780 1375 860 1425",
    "985 25 1025 75 1030 135 1060 145 1060 180 1110 190 1105 255 1135 300 1168 408 1130 465 1075 485 1070 507 1048 490 1010 520 990 550 1000 600 985 655 945 720 962 765 950 815 910 860 822 888 825 920 855 970 920 972 965 985",
    "180 380 205 420 195 450 225 470 275 485 280 510 330 560 300 640",
    "210 710 250 650 300 640",
    "1060 1165 1110 1240 1108 1310 1065 1320 1060 1395",
    "1515 0 1540 50",
  ],
  wideRivers: [],
  majors: [
    "205 0 180 15 165 60 145 155 135 245 120 285 100 297 75 290 45 297 20 330 -30 380",
    "0 778 90 768 110 745 135 735 170 690 210 682 255 632 325 637 372 628 430 660 432 690 445 708 480 722 545 728 590 748 620 735 650 733 735 710 755 690 785 687 855 702 880 730 905 747 1025 757 1090 737 1150 722 1198 725 1218 748 1285 765 1330 790 1355 793 1400 778 1475 805 1570 745",
    "-30 780 0 825 25 850 50 900 50 985 75 1030 75 1050 65 1080 80 1130 75 1190 98 1220 128 1235 145 1295 182 1350 182 1395 195 1430",
    "1230 270 1325 292 1380 345 1400 372 1425 378 1475 418 1530 422 1570 445",
    "1230 275 1225 370 1170 435 1120 540 1120 580 1100 655 1065 685 1068 745 1092 805 1070 890 1048 945 1035 1010 1045 1040 1047 1120 1035 1160 1052 1250 1038 1300 1020 1385 980 1430",
    "-5 715 12 750 5 778",
  ],
  minors: [
    "1245 0 1230 125 1240 240 1230 270",
    "308 -10 375 92 405 100 430 120 455 155 570 235 575 260 598 305 592 350 635 405 665 500 640 600 662 620 680 660 688 705",
    "655 740 675 768 668 860 655 888 595 883 560 890 525 920 522 945 505 978 470 972 430 990 412 1060 408 1120 350 1150 348 1200 320 1250 305 1275 303 1330 272 1380 272 1430",
    "662 620 705 608 728 580 730 545 748 530 745 480 760 425 780 385 800 305 828 262 855 268",
    "865 268 922 258 948 205 928 150 930 115 940 45 985 35 985 -10",
    "985 0 1075 95 1085 130 1165 205 1230 270",
    "1100 148 1140 152 1165 205 1230 165",
    "1100 148 1125 212 1165 205",
    "0 398 40 408 50 440 100 475 150 520 190 570 205 615 250 620",
    "1395 380 1365 415 1325 430 1325 450 1370 490 1390 570 1425 580 1462 610 1468 710 1525 758",
    "1568 790 1530 830 1495 900 1400 918 1330 970 1285 1005",
    "1275 1015 1240 1075 1215 1120 1180 1130 1130 1165 1128 1195 1150 1220 1155 1270 1190 1330 1190 1430",
    "1045 1030 1085 1042 1150 1032 1185 1042 1205 1075 1215 1140 1260 1210 1265 1240 1285 1280 1290 1360 1315 1400 1312 1415 1240 1420",
    "1315 1412 1355 1418 1395 1408 1450 1370 1470 1340 1530 1308 1568 1295",
    "1535 1310 1540 1430",
    "650 725 645 690 655 670 680 662 715 660 745 675",
    "400 1190 425 1190 465 1250",
    "350 1150 375 1172",
    "1155 1240 1160 1325",
  ],
  dashed: [
    "240 1050 290 1045 320 1095 345 1140",
    "470 1270 480 1330 550 1345",
    "590 1330 605 1300 660 1275 710 1250",
    "740 1265 775 1285",
    "810 1265 840 1215",
    "870 1175 910 1185",
    "930 1215 950 1245 1010 1290",
    "1045 1340 1055 1380 1090 1425",
    "1205 1150 1250 1125 1290 1150 1330 1160 1365 1155 1385 1130",
    "1545 1190 1530 1230 1560 1270",
    "1460 1425 1490 1360 1530 1330",
    "1195 1190 1175 1240 1205 1330 1205 1425",
  ],
  states: [
    "0 98 25 90 52 145 35 135 25 160 5 190 32 235 25 265 35 290",
    "75 385 100 290 165 300 165 315 200 285 225 265 270 270 285 235 300 222 318 232 370 190 377 130 410 130 445 158 470 155 490 140 510 155 500 130 502 100 530 85",
    "513 0 515 55 527 82 565 78 605 98 632 110 635 125 615 140 645 180 640 200 657 225 658 268 700 275 740 292 780 285 820 290 828 305 855 310 857 345 895 380 870 430 850 435 845 452 895 475 895 510 882 515 892 552 930 552 940 538 960 548 985 547 1000 580 1030 600 1095 597 1110 615 1148 665 1215 662 1243 692 1277 625 1262 610 1272 565 1250 552 1230 490 1237 455 1215 370 1230 350 1225 270 1212 240 1235 222 1235 180 1255 152 1280 155 1300 133 1340 135 1345 113 1370 125 1430 103 1468 65 1505 77 1540 48 1568 80",
    "1272 565 1298 552 1310 570 1350 572 1378 590 1385 610 1405 645 1430 650 1447 710 1435 728 1382 725 1355 745 1350 775 1310 770 1300 787 1258 797 1275 820 1250 865 1265 870 1265 905 1290 915 1287 940 1255 965 1218 960 1205 1000 1175 1000 1150 1030 1135 980 1110 995 1080 1040 1105 1050 1120 1085 1090 1115 1115 1135 1130 1170 1135 1200 1190 1225",
    "1100 1130 1060 1165 1035 1140 990 1160 910 1175 905 1155 870 1125 870 1060 835 1052 820 1080 790 1090 790 1110 802 1130 797 1235 785 1268 765 1255 735 1260 740 1235 730 1190 700 1195 640 1170 610 1162 545 1180 540 1220 600 1262 598 1290 550 1290 535 1325 485 1300 480 1215 450 1200 430 1180 385 1150 360 1080 310 1060 300 1030 258 1018 222 1055 215 1090 180 1135 135 1155 110 1138 90 1140 78 1190 80 1235 35 1275 40 1300 0 1305",
    "222 1055 228 1030 220 970 238 965 225 925 180 930 185 960 145 955 160 905 170 850 180 790 210 780 225 740 205 710 180 700 228 690 210 660 220 630 270 645 300 640 295 615 265 520 300 515 310 480 235 440 225 400 185 395 175 375",
  ],
  nations: [
    "1568 1140 1530 1105 1515 1120 1470 1160 1460 1140 1385 1158 1365 1195 1330 1225 1310 1290 1297 1350 1272 1345 1275 1310 1255 1275 1235 1260 1230 1225 1192 1225 1205 1260 1185 1280 1215 1315 1240 1355 1235 1400 1265 1420",
  ],
};

const sheets = [northWest, northEast, southWest, southEast];

function Areas({ pick, fill }: { pick: (s: Sheet) => string[]; fill: string }) {
  return (
    <>
      {sheets.map((s) => (
        <g key={s.at} transform={s.at} fill={fill}>
          {pick(s).map((points) => (
            <polygon key={points} points={points} />
          ))}
        </g>
      ))}
    </>
  );
}

type LinesProps = {
  pick: (s: Sheet) => string[];
  stroke: string;
  width: number;
  dash?: string;
  opacity?: number;
};

function Lines({ pick, stroke, width, dash, opacity }: LinesProps) {
  return (
    <>
      {sheets.map((s) => (
        <g key={s.at} transform={s.at} fill="none" stroke={stroke} strokeWidth={width} strokeDasharray={dash} strokeLinejoin="round" opacity={opacity}>
          {pick(s).map((points) => (
            <polyline key={points} points={points} vectorEffect="non-scaling-stroke" />
          ))}
        </g>
      ))}
    </>
  );
}

type City = { name: string; x: number; y: number; cx: number; cy: number; kind: "town" | "city" | "metro" };

const cities: City[] = [
  { name: "Groningen", x: 69, y: 519, cx: 59, cy: 520, kind: "town" },
  { name: "Bremen", x: 475, y: 559, cx: 464, cy: 563, kind: "city" },
  { name: "Münster", x: 259, y: 894, cx: 250, cy: 895, kind: "town" },
  { name: "Bielefeld", x: 422, y: 876, cx: 414, cy: 876, kind: "town" },
  { name: "Hannover", x: 643, y: 771, cx: 633, cy: 774, kind: "city" },
  { name: "Braunschweig", x: 782, y: 805, cx: 774, cy: 805, kind: "town" },
  { name: "Magdeburg", x: 984, y: 843, cx: 976, cy: 844, kind: "town" },
  { name: "Dortmund", x: 232, y: 1022, cx: 221, cy: 1026, kind: "city" },
  { name: "Essen", x: 27, y: 1068, cx: 139, cy: 1045, kind: "city" },
  { name: "Düsseldorf", x: 107, y: 1105, cx: 96, cy: 1109, kind: "city" },
  { name: "Cologne", x: 144, y: 1186, cx: 130, cy: 1192, kind: "metro" },
  { name: "Bonn", x: 163, y: 1249, cx: 154, cy: 1249, kind: "town" },
  { name: "Kassel", x: 594, y: 1083, cx: 586, cy: 1083, kind: "town" },
  { name: "Leipzig", x: 1120, y: 1072, cx: 1109, cy: 1076, kind: "city" },
  { name: "Frankfurt", x: 452, y: 1423, cx: 441, cy: 1428, kind: "city" },
];

const cityText = {
  town: "text-[31px] font-medium",
  city: "text-[34px] font-semibold",
  metro: "text-[38px] font-semibold",
};

function Pin({ x, y }: { x: number; y: number }) {
  return (
    <g transform={`translate(${x} ${y})`}>
      <path d="M0 0C-3 -10 -8 -15 -16 -18C-31 -25 -42 -39 -42 -57A42 42 0 0 1 42 -57C42 -39 31 -25 16 -18C8 -15 3 -10 0 0Z" fill="url(#pinRed)" filter="url(#pinShadow)" />
      <circle cx="0" cy="-72" r="12.3" fill="#fff" />
      <path d="M-3.6 -58H3.6L2.6 -31Q0 -29 -2.4 -31Z" fill="#fff" />
    </g>
  );
}

function MapCanvas() {
  return (
    <svg className="block h-full w-full" viewBox="0 498 1206 937" preserveAspectRatio="xMidYMid slice" role="img" aria-label="Map of Germany with event pins">
      <defs>
        <radialGradient id="pinRed" cx="0.5" cy="0.25" r="0.7">
          <stop offset="0" stopColor="#ff4d4d" />
          <stop offset="0.5" stopColor="#f81717" />
          <stop offset="0.8" stopColor="#e40404" />
          <stop offset="1" stopColor="#b80000" />
        </radialGradient>
        <linearGradient id="peak" x1="0" y1="0" x2="0" y2="1">
          <stop offset="0" stopColor="#a3897b" />
          <stop offset="1" stopColor="#625043" />
        </linearGradient>
        <filter id="pinShadow" x="-50%" y="-50%" width="200%" height="200%">
          <feDropShadow dx="0" dy="6" stdDeviation="5" floodOpacity="0.3" />
        </filter>
        <path id="werra" d="M731 1260Q752 1298 806 1340" />
      </defs>
      <rect y="490" width="1206" height="950" fill="#caef96" />
      <Areas pick={(s) => s.light} fill="#c0ea95" />
      <Areas pick={(s) => s.hill} fill="#b9e39c" />
      <Areas pick={(s) => s.forest} fill="#b1e192" />
      <Areas pick={(s) => s.clearing} fill="#c8ee96" />
      <Areas pick={(s) => s.urban} fill="#f0f1e6" />
      <Areas pick={(s) => s.water} fill="#8fdbfa" />
      <Lines pick={(s) => s.rivers} stroke="#8fdbfa" width={2} />
      <Lines pick={(s) => s.wideRivers} stroke="#8fdbfa" width={4} />
      <Lines pick={(s) => s.minors} stroke="#f4f8f4" width={6} />
      <Lines pick={(s) => s.majors} stroke="#f4f8f4" width={8} />
      <Lines pick={(s) => s.dashed} stroke="#f4f8f4" width={5} dash="6 5" />
      <Lines pick={(s) => s.dashed} stroke="#7fa3d6" width={3} dash="6 5" />
      <Lines pick={(s) => s.minors} stroke="#7fa3d6" width={3} />
      <Lines pick={(s) => s.majors} stroke="#7fa3d6" width={5} />
      <Lines pick={(s) => s.states} stroke="#ad6b92" width={2} opacity={0.9} />
      <Lines pick={(s) => s.nations} stroke="#c05a9c" width={9} opacity={0.3} />
      <Lines pick={(s) => s.nations} stroke="#b5669a" width={4} />
      <Lines pick={(s) => s.nations} stroke="#b0009c" width={4} dash="3 13" />

      <g fontFamily="Inter, 'Liberation Sans', sans-serif" stroke="#f0f3e8" strokeWidth="6" strokeLinejoin="round" paintOrder="stroke">
        {cities.map((c) => (
          <g key={c.name}>
            {c.kind === "town" ? (
              <circle cx={c.cx} cy={c.cy} r="5" fill="#1a1a1a" strokeWidth="3" />
            ) : (
              <>
                <circle cx={c.cx} cy={c.cy} r="9" fill="#f0f3e8" stroke="none" />
                <circle cx={c.cx} cy={c.cy} r="5.5" fill="#fff" stroke="#1a1a1a" strokeWidth="4" paintOrder="normal" />
              </>
            )}
            <text x={c.x} y={c.y} fill="#1a1a1a" className={cityText[c.kind]}>
              {c.name}
            </text>
          </g>
        ))}
        <circle cx="1207" cy="1222" r="5" fill="#1a1a1a" strokeWidth="3" />
        <text x="30" y="706" textAnchor="end" fill="#7e3160" className="text-[34px] font-bold">
          NETHERLANDS
        </text>
        <text x="649" y="1162" fill="#7e3160" className="text-[40px] font-bold">
          GERMANY
        </text>
        <text x="824" y="953" fill="#7d6558" className="text-[30px] font-semibold">
          Brocken
        </text>
        <text transform="translate(1048 734) rotate(-80)" fill="#4a96d8" className="text-[31px] font-medium italic">
          Elbe
        </text>
        <text fill="#4a96d8" className="text-[31px] font-medium">
          <textPath href="#werra">Werra</textPath>
        </text>
      </g>

      <circle cx="791" cy="942" r="26" fill="#e9ebe0" />
      <circle cx="791" cy="942" r="22" fill="url(#peak)" />
      <path d="M776 948L786 932Q788 930 790 932L796 940L798 936L807 948Z" fill="#fff" />

      <circle cx="377" cy="1274" r="32.5" fill="#fff" filter="url(#pinShadow)" />
      <circle cx="377" cy="1274" r="24" fill="#007aff" />
      <Pin x={833} y={617} />
      <Pin x={413} y={1307} />
    </svg>
  );
}

const filters = ["All", "Concerts", "Festivals", "Sports", "Conferences"];

function StatusBar() {
  return (
    <div className="grid h-[192px] shrink-0 grid-cols-[1fr_376px_1fr] items-start pt-[41px]">
      <div className="flex h-[112px] items-center justify-center pl-7 text-[50px] font-semibold">12:35</div>
      <div className="h-[111px] rounded-full bg-black" />
      <div className="flex h-[112px] items-center justify-center gap-[22px] pr-8">
        <svg className="h-[37px] w-[58px]" viewBox="0 0 58 37" fill="#cbcbcb">
          <rect y="28" width="10" height="10" rx="3" />
          <rect x="16" y="28" width="10" height="10" rx="3" />
          <rect x="32" y="28" width="10" height="10" rx="3" />
          <rect x="48" y="28" width="10" height="10" rx="3" />
        </svg>
        <svg className="h-[37px] w-[51px]" viewBox="0 0 51 37">
          <path d="M25.5 0C35.4 0 44.3 3.8 50.5 10C51 10.500 51 11.100 50.600 11.500L47 15.200Q46.300 15.800 45.600 15.200C40.300 10.200 33.200 7.200 25.500 7.200S10.700 10.200 5.400 15.200Q4.700 15.800 4 15.200L0.400 11.500C0 11.100 0 10.500 0.500 10C6.700 3.800 15.600 0 25.500 0Z" />
          <path d="M25.500 12.300C31.800 12.300 37.600 14.600 42 18.600Q42.700 19.300 42 20L38.300 23.700Q37.600 24.300 36.900 23.700C33.900 21 29.900 19.500 25.500 19.500S17.100 21 14.100 23.700Q13.400 24.300 12.700 23.700L9 20Q8.300 19.300 9 18.600C13.400 14.600 19.200 12.300 25.500 12.300Z" />
          <path d="M25.500 24.500C28.600 24.500 31.400 25.500 33.500 27.300Q34.200 28 33.500 28.700L26.300 36.200Q25.500 37 24.700 36.200L17.500 28.700Q16.800 28 17.500 27.300C19.600 25.500 22.400 24.500 25.500 24.500Z" />
        </svg>
        <svg className="h-[39px] w-[82px]" viewBox="0 0 82 39">
          <rect x="1.500" y="1.500" width="72" height="36" rx="12" fill="none" stroke="#9a9a9a" strokeWidth="3" />
          <rect x="6" y="6" width="63" height="27" rx="8" />
          <path d="M78 13Q82 15 82 19.500T78 26Z" fill="#8a8a8a" />
        </svg>
      </div>
    </div>
  );
}

type EventItem = { id: number; title?: string; tag?: string; date?: string; text?: string; place?: string };

const events: EventItem[] = [
  { id: 1, title: "Zzz", tag: "art", date: "2025-05-24T15:38:00.000Z" },
  { id: 2, title: "Test Post", tag: "other", date: "2025-06-12", text: "Test Post", place: "Current location" },
  { id: 3 },
];

function EventCard({ event }: { event: EventItem }) {
  return (
    <article className="min-h-[274px] shrink-0 rounded-[36px] border-[6px] border-[#e5e5e5] bg-white p-[45px] shadow-[0_6px_18px_rgba(0,0,0,0.1)]">
      {event.title && <h3 className="text-[47px] leading-[58px] font-bold">{event.title}</h3>}
      {event.tag && (
        <div className="mt-[23px] flex items-center gap-[26px]">
          <span className="flex h-[67px] items-center rounded-full bg-[#ee414b] px-6 text-[36px] font-semibold text-white">{event.tag}</span>
          <span className="text-[42px] leading-[50px] text-[#666]">{event.date}</span>
        </div>
      )}
      {event.text && <p className="mt-[30px] text-[41px] leading-[50px]">{event.text}</p>}
      {event.place && (
        <p className="mt-[30px] flex items-center gap-3 text-[41px] leading-[50px] text-[#666]">
          <MdLocationOn className="size-12" />
          {event.place}
        </p>
      )}
    </article>
  );
}

const tabs = [
  { name: "Home", icon: <MdHome className="size-[75px]" />, active: false },
  { name: "Map", icon: <MdMap className="size-[84px]" />, active: true },
  { name: "Profile", icon: <MdPerson className="size-[75px]" />, active: false },
];

export default function App() {
  return (
    <div className="flex h-screen flex-col overflow-hidden bg-white font-['Inter','Liberation_Sans',sans-serif] text-black">
      <StatusBar />

      <header className="flex h-[168px] shrink-0 items-center justify-between pr-[18px] pl-[30px]">
        <h1 className="text-[52px] leading-[64px] font-semibold">Map View</h1>
        <div className="flex">
          <button type="button" aria-label="Map type" className="p-9">
            <MdMap className="size-[72px]" />
          </button>
          <button type="button" aria-label="Refresh" className="p-9">
            <MdRefresh className="size-[72px]" />
          </button>
        </div>
      </header>

      <div className="h-[138px] shrink-0 border-b-[3px] border-[#e5e5e5] px-[30px] pt-[6px]">
        <div className="flex gap-6 overflow-hidden">
          {filters.map((name, i) => (
            <button
              key={name}
              type="button"
              className={
                i === 0
                  ? "h-[99px] shrink-0 rounded-full bg-[#ee414b] px-12 text-[42px] font-medium text-white"
                  : "h-[99px] shrink-0 rounded-full px-12 text-[42px] font-medium"
              }
            >
              {name}
            </button>
          ))}
        </div>
      </div>

      <section className="relative h-[937px] shrink-0 overflow-hidden">
        <MapCanvas />
        <div className="absolute bottom-[19px] left-[29px] flex items-center text-black/60">
          <FaApple className="size-9" />
          <span className="text-[44px] leading-[56px]">Maps</span>
          <a href="#legal" className="ml-7 pt-1 text-[28px] underline">
            Legal
          </a>
        </div>
      </section>

      <h2 className="shrink-0 px-[45px] pt-8 pb-[30px] text-[53px] leading-[64px] font-semibold">Events (14)</h2>

      <main className="mx-[30px] flex min-h-0 flex-1 flex-col gap-[30px] overflow-hidden">
        {events.map((event) => (
          <EventCard key={event.id} event={event} />
        ))}
      </main>

      <nav className="flex h-[279px] shrink-0 flex-col items-center justify-between bg-white pt-[45px] pb-6">
        <div className="grid w-full grid-cols-3">
          {tabs.map((tab) => (
            <a
              key={tab.name}
              href={`#${tab.name.toLowerCase()}`}
              className={tab.active ? "flex flex-col items-center text-[#ee414b]" : "flex flex-col items-center text-[#8e8e8e]"}
            >
              <span className="flex h-[84px] items-center">{tab.icon}</span>
              <span className="text-[30px] leading-[36px] font-medium">{tab.name}</span>
            </a>
          ))}
        </div>
        <div className="h-[15px] w-[432px] rounded-full bg-linear-to-r from-[#666] via-[#6a6a6a] via-90% to-[#b4b4b4]" />
      </nav>
    </div>
  );
}
